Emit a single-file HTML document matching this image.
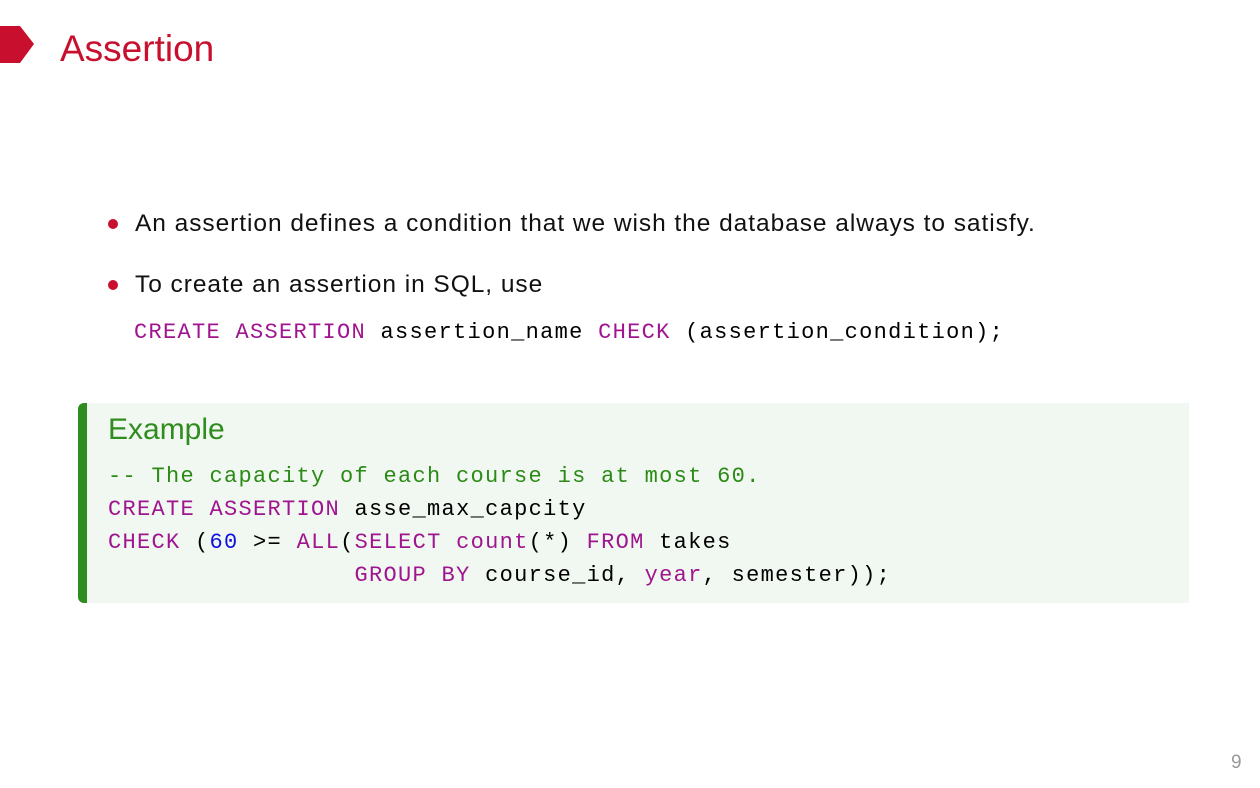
<!DOCTYPE html>
<html><head><meta charset="utf-8"><style>
body{margin:0;width:1260px;height:788px;background:#fff;position:relative;overflow:hidden;font-family:"Liberation Sans",sans-serif}
.t{position:absolute;left:60px;top:27px;font-size:37px;color:#c8102e;line-height:44px}
.b{position:absolute;font-size:24.5px;letter-spacing:0.95px;color:#111;line-height:30px}
.dot{position:absolute;width:10px;height:10px;border-radius:50%;background:#c8102e}
.m{font-family:"Liberation Mono",monospace;font-size:22px;letter-spacing:1.3px;white-space:pre;line-height:33px}
.k{color:#a0158f}.c{color:#2b8a16}.n{color:#1010e0}
.box{position:absolute;left:78px;top:403px;width:1102px;height:200px;background:#f1f8f1;border-left:9px solid #2f8c1e;border-radius:6px 0 0 6px}
</style></head><body>
<svg style="position:absolute;left:0;top:26px" width="36" height="38"><polygon points="0,0 20,0 34,18 20,37 0,37" fill="#c8102e"/></svg>
<div class="t">Assertion</div>
<div class="dot" style="left:108px;top:219px"></div>
<div class="b" style="left:135px;top:209px">An assertion defines a condition that we wish the database always to satisfy.</div>
<div class="dot" style="left:108px;top:280px"></div>
<div class="b" style="left:135px;top:270px">To create an assertion in SQL, use</div>
<div class="m" style="position:absolute;left:134px;top:316px"><span class="k">CREATE ASSERTION</span> assertion_name <span class="k">CHECK</span> (assertion_condition);</div>
<div class="box"></div>
<div style="position:absolute;left:108px;top:411px;font-size:30px;color:#2f8c1e;line-height:38px">Example</div>
<div class="m" style="position:absolute;left:108px;top:460px"><span class="c">-- The capacity of each course is at most 60.</span>
<span class="k">CREATE ASSERTION</span> asse_max_capcity
<span class="k">CHECK</span> (<span class="n">60</span> &gt;= <span class="k">ALL</span>(<span class="k">SELECT</span> <span class="k">count</span>(*) <span class="k">FROM</span> takes
                 <span class="k">GROUP BY</span> course_id, <span class="k">year</span>, semester));</div>
<div style="position:absolute;left:1231px;top:752px;font-size:19px;color:#999">9</div>
</body></html>
